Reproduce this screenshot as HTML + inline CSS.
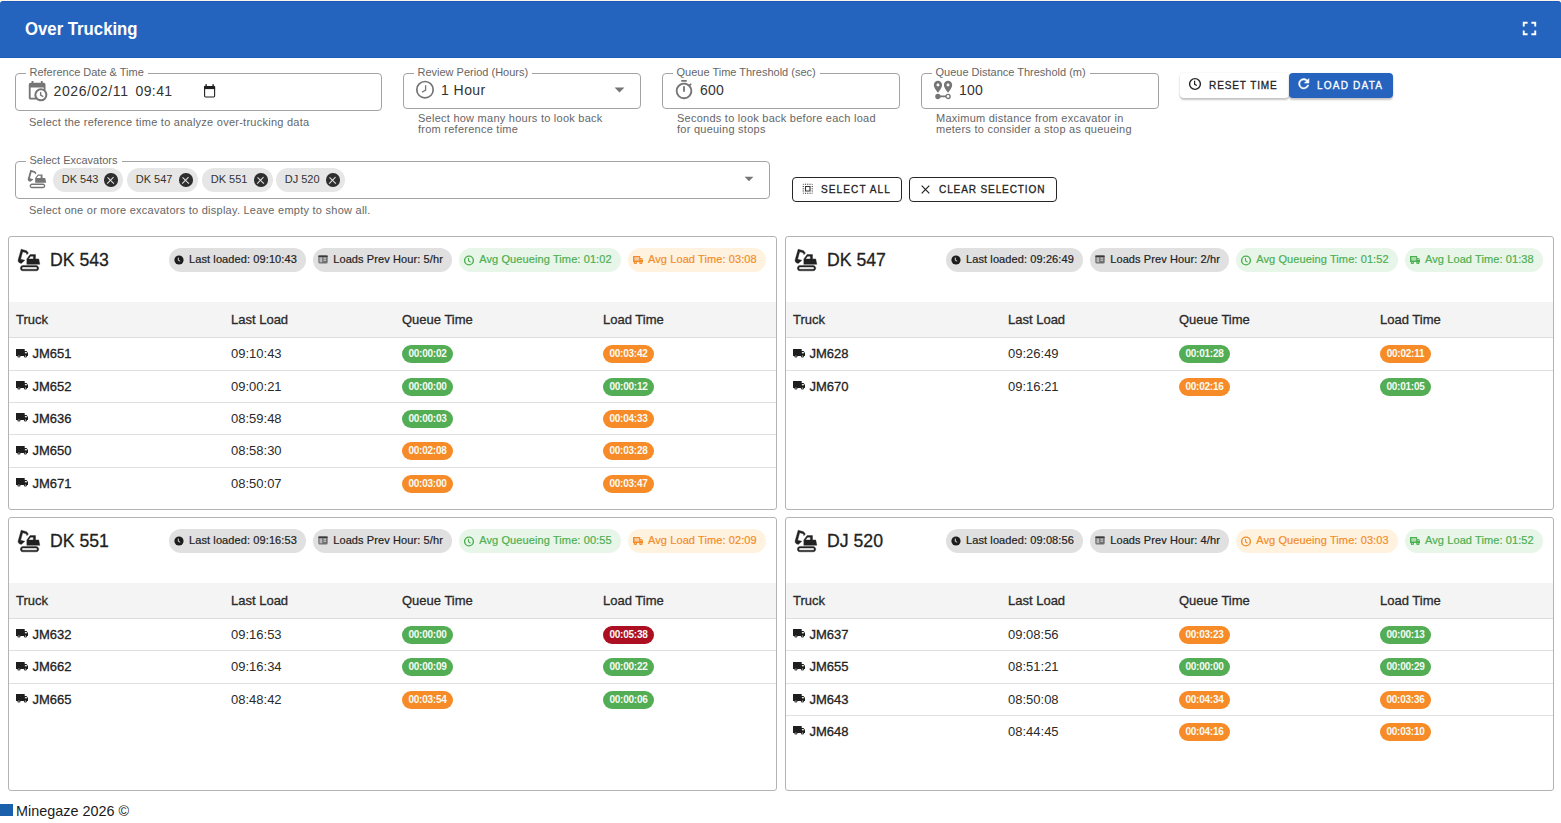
<!DOCTYPE html>
<html><head><meta charset="utf-8">
<style>
*{box-sizing:border-box;margin:0;padding:0}
html,body{width:1561px;height:823px;overflow:hidden;background:#fff;font-family:"Liberation Sans",sans-serif;color:#212121}
.abs{position:absolute}
#topline{position:absolute;left:0;top:0;width:1561px;height:1px;background:#fcf6ea}
#hdr{position:absolute;left:0;top:1px;width:1561px;height:56px;background:#2564be;border-top:1px solid #1a5bbd;border-radius:3px 3px 0 0;box-shadow:0 1px 0 #1d5cb8}
#hdr .t{position:absolute;left:25px;top:17px;font-size:18px;font-weight:700;color:#fff;transform:scaleX(0.93);transform-origin:0 0;white-space:nowrap}
.fld{position:absolute;border:1px solid #a3a3a3;border-radius:4px}
.lbl{position:absolute;top:-8px;left:9.5px;padding:0 4px;background:#fff;font-size:11px;color:#666;white-space:nowrap;line-height:12px}
.help{position:absolute;font-size:11px;color:#666;letter-spacing:0.25px;line-height:11px;white-space:nowrap}
.val{position:absolute;font-size:14px;color:#333;white-space:nowrap}
.btn{position:absolute;border-radius:4px;font-size:11px;font-weight:400;-webkit-text-stroke:0.3px currentColor;white-space:nowrap}
.card{position:absolute;border:1px solid #b4b4b4;border-radius:3px;background:#fff;overflow:hidden}
.card .ttl{position:absolute;left:40.5px;top:12px;font-size:19px;color:#212121;white-space:nowrap;-webkit-text-stroke:0.3px #212121;transform:scaleX(0.93);transform-origin:0 0}
.card .ico{position:absolute;left:7px;top:10px}
.chips{position:absolute;top:11px;display:flex;gap:7.3px}
.chip{height:24px;border-radius:12px;background:#e0e0e0;font-size:11px;color:#222;display:flex;align-items:center;padding:0 9px 2px 5px;white-space:nowrap;letter-spacing:0.1px;-webkit-text-stroke:0.2px currentColor}
.chip svg{margin-right:5px;position:relative;top:1px}
.chip.g{background:#e8f5e9;color:#4caf50}
.chip.o{background:#fff3e0;color:#f28c28}
.thead{position:absolute;left:0;top:65px;width:100%;height:36px;background:#f4f4f4;border-bottom:1px solid #dcdcdc}
.th{position:absolute;top:10px;font-size:13px;font-weight:400;-webkit-text-stroke:0.3px #2a2a2a;color:#2a2a2a;white-space:nowrap}
.row{position:absolute;left:0;width:100%;height:32.35px;border-bottom:1px solid #e0e0e0}
.row.last{border-bottom:none}
.cell{position:absolute;top:8px;font-size:13px;color:#2a2a2a;white-space:nowrap}
.truck{-webkit-text-stroke:0.3px #222;color:#222;padding-left:16.4px}
.tk{position:absolute;left:0.2px;top:2.4px}
.bdg{position:absolute;top:7px;height:18px;width:51px;border-radius:9px;font-size:10px;font-weight:700;color:#f6fbf6;text-align:center;line-height:17.5px;letter-spacing:-0.25px}
.bg{background:#52ad55}
.bo{background:#f68b27}
.br{background:#ad0f22}
#foot{position:absolute;left:0;top:803px;font-size:14.4px;line-height:16px;color:#1a1a1a;white-space:nowrap}
.bt{font-size:11.2px;letter-spacing:0.95px;transform:scaleX(0.9);transform-origin:0 0}
.schip{position:absolute;top:168px;height:24px;border-radius:12px;background:#e6e6e6;font-size:11px;color:#333}
.schip span{position:absolute;left:8.7px;top:5px;white-space:nowrap}
.schip i{position:absolute;right:5.5px;top:5.2px;width:13.5px;height:13.5px;border-radius:50%;background:#2e2e2e}
.schip i:before,.schip i:after{content:"";position:absolute;left:6.15px;top:2.5px;width:1.2px;height:8.5px;background:#e6e6e6;transform:rotate(45deg)}
.schip i:after{transform:rotate(-45deg)}
</style></head><body>
<div id="topline"></div>
<div id="hdr"><div class="t">Over Trucking</div>
<svg class="abs" style="left:1518px;top:15.3px" width="23" height="23" viewBox="0 0 24 24"><path fill="#fff" d="M7 14H5v5h5v-2H7v-3zm-2-4h2V7h3V5H5v5zm12 7h-3v2h5v-5h-2v3zM14 5v2h3v3h2V5h-5z"/></svg>
</div>

<!-- FORM ROW 1 -->
<div class="fld" style="left:15px;top:73px;width:367px;height:38px">
  <div class="lbl">Reference Date &amp; Time</div>
</div>
<svg class="abs" style="left:25.5px;top:79.6px" width="22.3" height="22.3" viewBox="0 0 24 24"><path fill="#757575" d="M15,13H16.5V15.82L18.94,17.23L18.19,18.53L15,16.69V13M19,8H5V19H9.67C9.24,18.09 9,17.07 9,16A7,7 0 0,1 16,9C17.070,9 18.09,9.24 19,9.67V8M5,21C3.89,21 3,20.1 3,19V5C3,3.89 3.89,3 5,3H6V1H8V3H16V1H18V3H19A2,2 0 0,1 21,5V11.1C22.24,12.36 23,14.09 23,16A7,7 0 0,1 16,23C14.09,23 12.36,22.24 11.1,21H5M16,11.15A4.85,4.85 0 0,0 11.15,16C11.15,18.68 13.32,20.85 16,20.85A4.85,4.85 0 0,0 20.85,16C20.85,13.32 18.68,11.15 16,11.15Z"/></svg>
<div class="val" style="left:53.5px;top:83px;letter-spacing:0.6px">2026/02/11</div>
<div class="val" style="left:135.5px;top:83px;letter-spacing:0.4px">09:41</div>
<svg class="abs" style="left:203px;top:84px" width="13" height="14" viewBox="0 0 13 14"><rect x="1.6" y="2.6" width="10" height="10.4" rx="0.9" fill="none" stroke="#1f1f1f" stroke-width="1.1"/><rect x="1.1" y="2.1" width="11" height="3" fill="#1f1f1f"/><rect x="2.4" y="0.2" width="1.4" height="2.2" fill="#1f1f1f"/><rect x="9.4" y="0.2" width="1.4" height="2.2" fill="#1f1f1f"/></svg>
<div class="help" style="left:29px;top:117px">Select the reference time to analyze over-trucking data</div>

<div class="fld" style="left:403px;top:73px;width:238px;height:36px">
  <div class="lbl">Review Period (Hours)</div>
</div>
<svg class="abs" style="left:415px;top:80px" width="20" height="20" viewBox="0 0 20 20"><circle cx="10" cy="9.7" r="8.2" fill="none" stroke="#757575" stroke-width="1.7"/><path d="M10.6 5.2V10.1L7 12.3" fill="none" stroke="#757575" stroke-width="1.3"/></svg>
<div class="val" style="left:441px;top:82px;letter-spacing:0.45px">1 Hour</div>
<svg class="abs" style="left:614px;top:87px" width="11" height="6" viewBox="0 0 11 6"><path d="M0.6 0.4H10.4L5.5 5.6Z" fill="#757575"/></svg>
<div class="help" style="left:418px;top:113px">Select how many hours to look back<br>from reference time</div>

<div class="fld" style="left:662px;top:73px;width:238px;height:36px">
  <div class="lbl">Queue Time Threshold (sec)</div>
</div>
<svg class="abs" style="left:673px;top:79px" width="22" height="22" viewBox="0 0 24 24"><path fill="#757575" d="M12,20A7,7 0 0,1 5,13A7,7 0 0,1 12,6A7,7 0 0,1 19,13A7,7 0 0,1 12,20M19.03,7.39L20.45,5.97C20,5.46 19.55,5 19.04,4.56L17.62,6C16.07,4.74 14.12,4 12,4A9,9 0 0,0 3,13A9,9 0 0,0 12,22C17,22 21,17.97 21,13C21,10.88 20.26,8.93 19.03,7.39M11,14H13V8H11M15,1H9V3H15V1Z"/></svg>
<div class="val" style="left:700px;top:82px;letter-spacing:0.2px">600</div>
<div class="help" style="left:677px;top:113px">Seconds to look back before each load<br>for queuing stops</div>

<div class="fld" style="left:921px;top:73px;width:238px;height:36px">
  <div class="lbl">Queue Distance Threshold (m)</div>
</div>
<svg class="abs" style="left:932px;top:79px" width="22" height="22" viewBox="0 0 24 24"><path fill="#757575" d="M6.5,8.11C5.61,8.11 4.89,7.39 4.89,6.5A1.61,1.61 0 0,1 6.5,4.89C7.39,4.89 8.11,5.61 8.11,6.5V6.5A1.61,1.61 0 0,1 6.5,8.11M6.5,2C4,2 2,4 2,6.5C2,9.87 6.5,14.86 6.5,14.86C6.5,14.86 11,9.87 11,6.5C11,4 9,2 6.5,2M17.5,8.11A1.61,1.61 0 0,1 15.89,6.5C15.89,5.61 16.61,4.89 17.5,4.89C18.39,4.89 19.11,5.61 19.11,6.5A1.61,1.61 0 0,1 17.5,8.11M17.5,2C15,2 13,4 13,6.5C13,9.87 17.5,14.86 17.5,14.86C17.5,14.86 22,9.87 22,6.5C22,4 20,2 17.5,2M17.5,16C16.23,16 15.1,16.8 14.68,18H9.32C8.9,16.8 7.77,16 6.5,16A3,3 0 0,0 3.5,19A3,3 0 0,0 6.5,22C7.77,22 8.9,21.2 9.32,20H14.68C15.1,21.2 16.23,22 17.5,22A3,3 0 0,0 20.5,19A3,3 0 0,0 17.5,16M17.5,20.5A1.5,1.5 0 0,1 16,19A1.5,1.5 0 0,1 17.5,17.5A1.5,1.5 0 0,1 19,19A1.5,1.5 0 0,1 17.5,20.5Z"/></svg>
<div class="val" style="left:959px;top:82px;letter-spacing:0.2px">100</div>
<div class="help" style="left:936px;top:113px">Maximum distance from excavator in<br>meters to consider a stop as queueing</div>

<div class="btn" style="left:1180px;top:73px;width:109px;height:25px;background:#fff;color:#222;box-shadow:0 2px 2px rgba(0,0,0,.22),0 0 2px rgba(0,0,0,.1)">
 <svg class="abs" style="left:8px;top:4px" width="14" height="14" viewBox="0 0 14 14"><circle cx="7" cy="7" r="5.4" fill="none" stroke="#222" stroke-width="1.4"/><path d="M6.6 3.8V7.3L8.8 8.6" fill="none" stroke="#222" stroke-width="1.2"/></svg>
 <span class="abs bt" style="left:29px;top:6px">RESET TIME</span>
</div>
<div class="btn" style="left:1289px;top:73px;width:104px;height:25px;background:#2563be;color:#fff;box-shadow:0 2px 2px rgba(0,0,0,.22),0 0 2px rgba(0,0,0,.1)">
 <svg class="abs" style="left:6.9px;top:3.2px" width="15.5" height="15.5" viewBox="0 0 24 24"><path fill="#fff" stroke="#fff" stroke-width="0.8" d="M17.65,6.35C16.2,4.9 14.21,4 12,4A8,8 0 0,0 4,12A8,8 0 0,0 12,20C15.73,20 18.84,17.45 19.73,14H17.65C16.83,16.33 14.61,18 12,18A6,6 0 0,1 6,12A6,6 0 0,1 12,6C13.66,6 15.14,6.69 16.22,7.78L13,11H20V4L17.65,6.35Z"/></svg>
 <span class="abs bt" style="left:28px;top:6px;letter-spacing:1.3px">LOAD DATA</span>
</div>

<!-- FORM ROW 2 -->
<div class="fld" style="left:15px;top:161px;width:755px;height:38px">
  <div class="lbl">Select Excavators</div>
</div>
<svg class="abs" style="left:26px;top:168px" width="22" height="22" viewBox="0 0 24 24"><path fill="#757575" d="M18.5,18.5C19.04,18.5 19.5,18.96 19.5,19.5C19.5,20.04 19.04,20.5 18.5,20.5H6.5C5.96,20.5 5.5,20.04 5.5,19.5C5.5,18.96 5.960,18.5 6.5,18.5H18.5M18.5,17H6.5C5.13,17 4,18.13 4,19.5C4,20.87 5.13,22 6.5,22H18.5C19.87,22 21,20.87 21,19.5C21,18.13 19.87,17 18.5,17M21,11H18V7H13L10,11V16H22L21,11M11.54,11L13.5,8.5H16V11H11.54M9.76,3.41L4.76,2L2,11.83C1.66,13.11 2.41,14.44 3.7,14.8L4.86,15.12L8.15,12.29L4.27,11.21L6.15,4.46L8.64,5.15C9.5,5.39 10.06,6.2 10,7.09L11.43,5.55L9.76,3.41Z"/></svg>
<div class="schip" style="left:53px;width:70px"><span>DK 543</span><i></i></div>
<div class="schip" style="left:127px;width:71px"><span>DK 547</span><i></i></div>
<div class="schip" style="left:202px;width:71px"><span>DK 551</span><i></i></div>
<div class="schip" style="left:276px;width:69px"><span>DJ 520</span><i></i></div>
<svg class="abs" style="left:744px;top:176px" width="10" height="6" viewBox="0 0 10 6"><path d="M0.6 0.8H9.4L5 5.2Z" fill="#757575"/></svg>
<div class="help" style="left:29px;top:205px">Select one or more excavators to display. Leave empty to show all.</div>

<div class="btn" style="left:792px;top:177px;width:110px;height:25px;border:1px solid #262626;color:#222">
 <svg class="abs" style="left:8.1px;top:4px" width="13.5" height="13.5" viewBox="0 0 24 24"><path fill="#333" d="M9,9H15V15H9M7,17H17V7H7M15,5H17V3H15M15,21H17V19H15M19,17H21V15H19M19,9H21V7H19M19,21A2,2 0 0,0 21,19H19M19,13H21V11H19M11,21H13V19H11M9,3H7V5H9M3,17H5V15H3M5,21V19H3A2,2 0 0,0 5,21M19,3V5H21A2,2 0 0,0 19,3M13,3H11V5H13M3,9H5V7H3M7,21H9V19H7M3,13H5V11H3M3,5H5V3A2,2 0 0,0 3,5Z"/></svg>
 <span class="abs bt" style="left:28px;top:5px;letter-spacing:1.2px">SELECT ALL</span>
</div>
<div class="btn" style="left:909px;top:177px;width:148px;height:25px;border:1px solid #262626;color:#222">
 <svg class="abs" style="left:11px;top:7px" width="9" height="9" viewBox="0 0 9 9"><path d="M0.7 0.7L8.3 8.3M8.3 0.7L0.7 8.3" stroke="#222" stroke-width="1.2"/></svg>
 <span class="abs bt" style="left:28.5px;top:5px">CLEAR SELECTION</span>
</div>

<!-- CARDS -->
<div id="cards"><div class="card" style="left:8px;top:236px;width:769px;height:274px">
<div class="ico"><svg width="26" height="26" viewBox="0 0 24 24"><path fill="#212121" stroke="#212121" stroke-width="0.35" d="M18.5,18.5C19.04,18.5 19.5,18.96 19.5,19.5C19.5,20.04 19.04,20.5 18.5,20.5H6.5C5.96,20.5 5.5,20.04 5.5,19.5C5.5,18.96 5.96,18.5 6.5,18.5H18.5M18.5,17H6.5C5.13,17 4,18.13 4,19.5C4,20.87 5.13,22 6.5,22H18.5C19.87,22 21,20.87 21,19.5C21,18.13 19.87,17 18.5,17M21,11H18V7H13L10,11V16H22L21,11M11.54,11L13.5,8.5H16V11H11.54M9.76,3.41L4.76,2L2,11.83C1.66,13.11 2.41,14.44 3.7,14.8L4.86,15.12L8.15,12.29L4.27,11.21L6.15,4.46L8.64,5.15C9.5,5.39 10.06,6.2 10,7.09L11.43,5.55L9.76,3.41Z"/></svg></div><div class="ttl">DK 543</div>
<div class="chips" style="left:160px"><div class="chip"><svg width="10" height="10" viewBox="0 0 10 10"><circle cx="5" cy="5" r="4.6" fill="#1c1c1c"/><path d="M4.3 2.6V5.3L6.2 6.2" fill="none" stroke="#ddd" stroke-width="1"/></svg>Last loaded: 09:10:43</div><div class="chip"><svg width="10" height="9" viewBox="0 0 10 9" style="top:0.5px"><rect x="0.3" y="0.5" width="9.4" height="8" rx="1.5" fill="#707070"/><rect x="0.3" y="0.5" width="9.4" height="1.4" fill="#333"/><rect x="1.6" y="2.4" width="2.6" height="4.8" fill="#b8b8b8"/><rect x="5.5" y="2.6" width="2.6" height="1.2" fill="#ccc"/><rect x="5.5" y="4.6" width="2.6" height="1.2" fill="#ccc"/></svg>Loads Prev Hour: 5/hr</div><div class="chip g"><svg width="10" height="11" viewBox="0.5 0 10 11"><circle cx="5.5" cy="5.5" r="4.4" fill="none" stroke="#4caf50" stroke-width="1.4"/><path d="M5 3V5.8L7 7.2" fill="none" stroke="#4caf50" stroke-width="1.1"/></svg>Avg Queueing Time: 01:02</div><div class="chip o"><svg width="10.4" height="8.4" viewBox="0 0 10.4 8.4" style="margin-left:-0.2px;margin-right:4.8px;position:relative;top:1px"><path d="M0 0.2Q0 0 0.3 0H7.2V1.9H8.9L10.4 3.8V5.9H0Z" fill="#f28c28"/><rect x="1.4" y="1.1" width="4.8" height="3.5" fill="#fff" opacity="0.55"/><rect x="7.6" y="2.8" width="1.8" height="1.1" fill="#fff" opacity="0.6"/><circle cx="2.4" cy="6.6" r="1.6" fill="#f28c28"/><circle cx="7.9" cy="6.6" r="1.6" fill="#f28c28"/><circle cx="2.4" cy="6.6" r="0.6" fill="#fff" opacity="0.6"/><circle cx="7.9" cy="6.6" r="0.6" fill="#fff" opacity="0.6"/></svg>Avg Load Time: 03:08</div></div>
<div class="thead"><div class="th" style="left:7px">Truck</div><div class="th" style="left:222px">Last Load</div><div class="th" style="left:393px">Queue Time</div><div class="th" style="left:594px">Load Time</div></div>
<div class="row" style="top:101.4px"><div class="cell truck" style="left:7px"><svg class="tk" width="12" height="9" viewBox="0 0 12 9"><path d="M0 0.3Q0 0 0.3 0H8.7V2.1H10.6L12 4V7H0Z" fill="#1e1e1e"/><rect x="8.9" y="3.1" width="2" height="1.2" fill="#fff"/><circle cx="2.9" cy="7" r="1.6" fill="#1e1e1e"/><circle cx="9.4" cy="7" r="1.6" fill="#1e1e1e"/><circle cx="2.9" cy="7" r="0.6" fill="#fff"/><circle cx="9.4" cy="7" r="0.6" fill="#fff"/></svg>JM651</div><div class="cell" style="left:222px">09:10:43</div><div class="bdg bg" style="left:393px">00:00:02</div><div class="bdg bo" style="left:594px">00:03:42</div></div>
<div class="row" style="top:133.75px"><div class="cell truck" style="left:7px"><svg class="tk" width="12" height="9" viewBox="0 0 12 9"><path d="M0 0.3Q0 0 0.3 0H8.7V2.1H10.6L12 4V7H0Z" fill="#1e1e1e"/><rect x="8.9" y="3.1" width="2" height="1.2" fill="#fff"/><circle cx="2.9" cy="7" r="1.6" fill="#1e1e1e"/><circle cx="9.4" cy="7" r="1.6" fill="#1e1e1e"/><circle cx="2.9" cy="7" r="0.6" fill="#fff"/><circle cx="9.4" cy="7" r="0.6" fill="#fff"/></svg>JM652</div><div class="cell" style="left:222px">09:00:21</div><div class="bdg bg" style="left:393px">00:00:00</div><div class="bdg bg" style="left:594px">00:00:12</div></div>
<div class="row" style="top:166.1px"><div class="cell truck" style="left:7px"><svg class="tk" width="12" height="9" viewBox="0 0 12 9"><path d="M0 0.3Q0 0 0.3 0H8.7V2.1H10.6L12 4V7H0Z" fill="#1e1e1e"/><rect x="8.9" y="3.1" width="2" height="1.2" fill="#fff"/><circle cx="2.9" cy="7" r="1.6" fill="#1e1e1e"/><circle cx="9.4" cy="7" r="1.6" fill="#1e1e1e"/><circle cx="2.9" cy="7" r="0.6" fill="#fff"/><circle cx="9.4" cy="7" r="0.6" fill="#fff"/></svg>JM636</div><div class="cell" style="left:222px">08:59:48</div><div class="bdg bg" style="left:393px">00:00:03</div><div class="bdg bo" style="left:594px">00:04:33</div></div>
<div class="row" style="top:198.45px"><div class="cell truck" style="left:7px"><svg class="tk" width="12" height="9" viewBox="0 0 12 9"><path d="M0 0.3Q0 0 0.3 0H8.7V2.1H10.6L12 4V7H0Z" fill="#1e1e1e"/><rect x="8.9" y="3.1" width="2" height="1.2" fill="#fff"/><circle cx="2.9" cy="7" r="1.6" fill="#1e1e1e"/><circle cx="9.4" cy="7" r="1.6" fill="#1e1e1e"/><circle cx="2.9" cy="7" r="0.6" fill="#fff"/><circle cx="9.4" cy="7" r="0.6" fill="#fff"/></svg>JM650</div><div class="cell" style="left:222px">08:58:30</div><div class="bdg bo" style="left:393px">00:02:08</div><div class="bdg bo" style="left:594px">00:03:28</div></div>
<div class="row last" style="top:230.8px"><div class="cell truck" style="left:7px"><svg class="tk" width="12" height="9" viewBox="0 0 12 9"><path d="M0 0.3Q0 0 0.3 0H8.7V2.1H10.6L12 4V7H0Z" fill="#1e1e1e"/><rect x="8.9" y="3.1" width="2" height="1.2" fill="#fff"/><circle cx="2.9" cy="7" r="1.6" fill="#1e1e1e"/><circle cx="9.4" cy="7" r="1.6" fill="#1e1e1e"/><circle cx="2.9" cy="7" r="0.6" fill="#fff"/><circle cx="9.4" cy="7" r="0.6" fill="#fff"/></svg>JM671</div><div class="cell" style="left:222px">08:50:07</div><div class="bdg bo" style="left:393px">00:03:00</div><div class="bdg bo" style="left:594px">00:03:47</div></div>
</div>
<div class="card" style="left:785px;top:236px;width:769px;height:274px">
<div class="ico"><svg width="26" height="26" viewBox="0 0 24 24"><path fill="#212121" stroke="#212121" stroke-width="0.35" d="M18.5,18.5C19.04,18.5 19.5,18.96 19.5,19.5C19.5,20.04 19.04,20.5 18.5,20.5H6.5C5.96,20.5 5.5,20.04 5.5,19.5C5.5,18.96 5.96,18.5 6.5,18.5H18.5M18.5,17H6.5C5.13,17 4,18.13 4,19.5C4,20.87 5.13,22 6.5,22H18.5C19.87,22 21,20.87 21,19.5C21,18.13 19.87,17 18.5,17M21,11H18V7H13L10,11V16H22L21,11M11.54,11L13.5,8.5H16V11H11.54M9.76,3.41L4.76,2L2,11.83C1.66,13.11 2.41,14.44 3.7,14.8L4.86,15.12L8.15,12.29L4.27,11.21L6.15,4.46L8.64,5.15C9.5,5.39 10.06,6.2 10,7.09L11.43,5.55L9.76,3.41Z"/></svg></div><div class="ttl">DK 547</div>
<div class="chips" style="left:160px"><div class="chip"><svg width="10" height="10" viewBox="0 0 10 10"><circle cx="5" cy="5" r="4.6" fill="#1c1c1c"/><path d="M4.3 2.6V5.3L6.2 6.2" fill="none" stroke="#ddd" stroke-width="1"/></svg>Last loaded: 09:26:49</div><div class="chip"><svg width="10" height="9" viewBox="0 0 10 9" style="top:0.5px"><rect x="0.3" y="0.5" width="9.4" height="8" rx="1.5" fill="#707070"/><rect x="0.3" y="0.5" width="9.4" height="1.4" fill="#333"/><rect x="1.6" y="2.4" width="2.6" height="4.8" fill="#b8b8b8"/><rect x="5.5" y="2.6" width="2.6" height="1.2" fill="#ccc"/><rect x="5.5" y="4.6" width="2.6" height="1.2" fill="#ccc"/></svg>Loads Prev Hour: 2/hr</div><div class="chip g"><svg width="10" height="11" viewBox="0.5 0 10 11"><circle cx="5.5" cy="5.5" r="4.4" fill="none" stroke="#4caf50" stroke-width="1.4"/><path d="M5 3V5.8L7 7.2" fill="none" stroke="#4caf50" stroke-width="1.1"/></svg>Avg Queueing Time: 01:52</div><div class="chip g"><svg width="10.4" height="8.4" viewBox="0 0 10.4 8.4" style="margin-left:-0.2px;margin-right:4.8px;position:relative;top:1px"><path d="M0 0.2Q0 0 0.3 0H7.2V1.9H8.9L10.4 3.8V5.9H0Z" fill="#4caf50"/><rect x="1.4" y="1.1" width="4.8" height="3.5" fill="#fff" opacity="0.55"/><rect x="7.6" y="2.8" width="1.8" height="1.1" fill="#fff" opacity="0.6"/><circle cx="2.4" cy="6.6" r="1.6" fill="#4caf50"/><circle cx="7.9" cy="6.6" r="1.6" fill="#4caf50"/><circle cx="2.4" cy="6.6" r="0.6" fill="#fff" opacity="0.6"/><circle cx="7.9" cy="6.6" r="0.6" fill="#fff" opacity="0.6"/></svg>Avg Load Time: 01:38</div></div>
<div class="thead"><div class="th" style="left:7px">Truck</div><div class="th" style="left:222px">Last Load</div><div class="th" style="left:393px">Queue Time</div><div class="th" style="left:594px">Load Time</div></div>
<div class="row" style="top:101.4px"><div class="cell truck" style="left:7px"><svg class="tk" width="12" height="9" viewBox="0 0 12 9"><path d="M0 0.3Q0 0 0.3 0H8.7V2.1H10.6L12 4V7H0Z" fill="#1e1e1e"/><rect x="8.9" y="3.1" width="2" height="1.2" fill="#fff"/><circle cx="2.9" cy="7" r="1.6" fill="#1e1e1e"/><circle cx="9.4" cy="7" r="1.6" fill="#1e1e1e"/><circle cx="2.9" cy="7" r="0.6" fill="#fff"/><circle cx="9.4" cy="7" r="0.6" fill="#fff"/></svg>JM628</div><div class="cell" style="left:222px">09:26:49</div><div class="bdg bg" style="left:393px">00:01:28</div><div class="bdg bo" style="left:594px">00:02:11</div></div>
<div class="row last" style="top:133.75px"><div class="cell truck" style="left:7px"><svg class="tk" width="12" height="9" viewBox="0 0 12 9"><path d="M0 0.3Q0 0 0.3 0H8.7V2.1H10.6L12 4V7H0Z" fill="#1e1e1e"/><rect x="8.9" y="3.1" width="2" height="1.2" fill="#fff"/><circle cx="2.9" cy="7" r="1.6" fill="#1e1e1e"/><circle cx="9.4" cy="7" r="1.6" fill="#1e1e1e"/><circle cx="2.9" cy="7" r="0.6" fill="#fff"/><circle cx="9.4" cy="7" r="0.6" fill="#fff"/></svg>JM670</div><div class="cell" style="left:222px">09:16:21</div><div class="bdg bo" style="left:393px">00:02:16</div><div class="bdg bg" style="left:594px">00:01:05</div></div>
</div>
<div class="card" style="left:8px;top:517px;width:769px;height:274px">
<div class="ico"><svg width="26" height="26" viewBox="0 0 24 24"><path fill="#212121" stroke="#212121" stroke-width="0.35" d="M18.5,18.5C19.04,18.5 19.5,18.96 19.5,19.5C19.5,20.04 19.04,20.5 18.5,20.5H6.5C5.96,20.5 5.5,20.04 5.5,19.5C5.5,18.96 5.96,18.5 6.5,18.5H18.5M18.5,17H6.5C5.13,17 4,18.13 4,19.5C4,20.87 5.13,22 6.5,22H18.5C19.87,22 21,20.87 21,19.5C21,18.13 19.87,17 18.5,17M21,11H18V7H13L10,11V16H22L21,11M11.54,11L13.5,8.5H16V11H11.54M9.76,3.41L4.76,2L2,11.83C1.66,13.11 2.41,14.44 3.7,14.8L4.86,15.12L8.15,12.29L4.27,11.21L6.15,4.46L8.64,5.15C9.5,5.39 10.06,6.2 10,7.09L11.43,5.55L9.76,3.41Z"/></svg></div><div class="ttl">DK 551</div>
<div class="chips" style="left:160px"><div class="chip"><svg width="10" height="10" viewBox="0 0 10 10"><circle cx="5" cy="5" r="4.6" fill="#1c1c1c"/><path d="M4.3 2.6V5.3L6.2 6.2" fill="none" stroke="#ddd" stroke-width="1"/></svg>Last loaded: 09:16:53</div><div class="chip"><svg width="10" height="9" viewBox="0 0 10 9" style="top:0.5px"><rect x="0.3" y="0.5" width="9.4" height="8" rx="1.5" fill="#707070"/><rect x="0.3" y="0.5" width="9.4" height="1.4" fill="#333"/><rect x="1.6" y="2.4" width="2.6" height="4.8" fill="#b8b8b8"/><rect x="5.5" y="2.6" width="2.6" height="1.2" fill="#ccc"/><rect x="5.5" y="4.6" width="2.6" height="1.2" fill="#ccc"/></svg>Loads Prev Hour: 5/hr</div><div class="chip g"><svg width="10" height="11" viewBox="0.5 0 10 11"><circle cx="5.5" cy="5.5" r="4.4" fill="none" stroke="#4caf50" stroke-width="1.4"/><path d="M5 3V5.8L7 7.2" fill="none" stroke="#4caf50" stroke-width="1.1"/></svg>Avg Queueing Time: 00:55</div><div class="chip o"><svg width="10.4" height="8.4" viewBox="0 0 10.4 8.4" style="margin-left:-0.2px;margin-right:4.8px;position:relative;top:1px"><path d="M0 0.2Q0 0 0.3 0H7.2V1.9H8.9L10.4 3.8V5.9H0Z" fill="#f28c28"/><rect x="1.4" y="1.1" width="4.8" height="3.5" fill="#fff" opacity="0.55"/><rect x="7.6" y="2.8" width="1.8" height="1.1" fill="#fff" opacity="0.6"/><circle cx="2.4" cy="6.6" r="1.6" fill="#f28c28"/><circle cx="7.9" cy="6.6" r="1.6" fill="#f28c28"/><circle cx="2.4" cy="6.6" r="0.6" fill="#fff" opacity="0.6"/><circle cx="7.9" cy="6.6" r="0.6" fill="#fff" opacity="0.6"/></svg>Avg Load Time: 02:09</div></div>
<div class="thead"><div class="th" style="left:7px">Truck</div><div class="th" style="left:222px">Last Load</div><div class="th" style="left:393px">Queue Time</div><div class="th" style="left:594px">Load Time</div></div>
<div class="row" style="top:101.0px"><div class="cell truck" style="left:7px"><svg class="tk" width="12" height="9" viewBox="0 0 12 9"><path d="M0 0.3Q0 0 0.3 0H8.7V2.1H10.6L12 4V7H0Z" fill="#1e1e1e"/><rect x="8.9" y="3.1" width="2" height="1.2" fill="#fff"/><circle cx="2.9" cy="7" r="1.6" fill="#1e1e1e"/><circle cx="9.4" cy="7" r="1.6" fill="#1e1e1e"/><circle cx="2.9" cy="7" r="0.6" fill="#fff"/><circle cx="9.4" cy="7" r="0.6" fill="#fff"/></svg>JM632</div><div class="cell" style="left:222px">09:16:53</div><div class="bdg bg" style="left:393px">00:00:00</div><div class="bdg br" style="left:594px">00:05:38</div></div>
<div class="row" style="top:133.35px"><div class="cell truck" style="left:7px"><svg class="tk" width="12" height="9" viewBox="0 0 12 9"><path d="M0 0.3Q0 0 0.3 0H8.7V2.1H10.6L12 4V7H0Z" fill="#1e1e1e"/><rect x="8.9" y="3.1" width="2" height="1.2" fill="#fff"/><circle cx="2.9" cy="7" r="1.6" fill="#1e1e1e"/><circle cx="9.4" cy="7" r="1.6" fill="#1e1e1e"/><circle cx="2.9" cy="7" r="0.6" fill="#fff"/><circle cx="9.4" cy="7" r="0.6" fill="#fff"/></svg>JM662</div><div class="cell" style="left:222px">09:16:34</div><div class="bdg bg" style="left:393px">00:00:09</div><div class="bdg bg" style="left:594px">00:00:22</div></div>
<div class="row last" style="top:165.7px"><div class="cell truck" style="left:7px"><svg class="tk" width="12" height="9" viewBox="0 0 12 9"><path d="M0 0.3Q0 0 0.3 0H8.7V2.1H10.6L12 4V7H0Z" fill="#1e1e1e"/><rect x="8.9" y="3.1" width="2" height="1.2" fill="#fff"/><circle cx="2.9" cy="7" r="1.6" fill="#1e1e1e"/><circle cx="9.4" cy="7" r="1.6" fill="#1e1e1e"/><circle cx="2.9" cy="7" r="0.6" fill="#fff"/><circle cx="9.4" cy="7" r="0.6" fill="#fff"/></svg>JM665</div><div class="cell" style="left:222px">08:48:42</div><div class="bdg bo" style="left:393px">00:03:54</div><div class="bdg bg" style="left:594px">00:00:06</div></div>
</div>
<div class="card" style="left:785px;top:517px;width:769px;height:274px">
<div class="ico"><svg width="26" height="26" viewBox="0 0 24 24"><path fill="#212121" stroke="#212121" stroke-width="0.35" d="M18.5,18.5C19.04,18.5 19.5,18.96 19.5,19.5C19.5,20.04 19.04,20.5 18.5,20.5H6.5C5.96,20.5 5.5,20.04 5.5,19.5C5.5,18.96 5.96,18.5 6.5,18.5H18.5M18.5,17H6.5C5.13,17 4,18.13 4,19.5C4,20.87 5.13,22 6.5,22H18.5C19.87,22 21,20.87 21,19.5C21,18.13 19.87,17 18.5,17M21,11H18V7H13L10,11V16H22L21,11M11.54,11L13.5,8.5H16V11H11.54M9.76,3.41L4.76,2L2,11.83C1.66,13.11 2.41,14.44 3.7,14.8L4.86,15.12L8.15,12.29L4.27,11.21L6.15,4.46L8.64,5.15C9.5,5.39 10.06,6.2 10,7.09L11.43,5.55L9.76,3.41Z"/></svg></div><div class="ttl">DJ 520</div>
<div class="chips" style="left:160px"><div class="chip"><svg width="10" height="10" viewBox="0 0 10 10"><circle cx="5" cy="5" r="4.6" fill="#1c1c1c"/><path d="M4.3 2.6V5.3L6.2 6.2" fill="none" stroke="#ddd" stroke-width="1"/></svg>Last loaded: 09:08:56</div><div class="chip"><svg width="10" height="9" viewBox="0 0 10 9" style="top:0.5px"><rect x="0.3" y="0.5" width="9.4" height="8" rx="1.5" fill="#707070"/><rect x="0.3" y="0.5" width="9.4" height="1.4" fill="#333"/><rect x="1.6" y="2.4" width="2.6" height="4.8" fill="#b8b8b8"/><rect x="5.5" y="2.6" width="2.6" height="1.2" fill="#ccc"/><rect x="5.5" y="4.6" width="2.6" height="1.2" fill="#ccc"/></svg>Loads Prev Hour: 4/hr</div><div class="chip o"><svg width="10" height="11" viewBox="0.5 0 10 11"><circle cx="5.5" cy="5.5" r="4.4" fill="none" stroke="#f28c28" stroke-width="1.4"/><path d="M5 3V5.8L7 7.2" fill="none" stroke="#f28c28" stroke-width="1.1"/></svg>Avg Queueing Time: 03:03</div><div class="chip g"><svg width="10.4" height="8.4" viewBox="0 0 10.4 8.4" style="margin-left:-0.2px;margin-right:4.8px;position:relative;top:1px"><path d="M0 0.2Q0 0 0.3 0H7.2V1.9H8.9L10.4 3.8V5.9H0Z" fill="#4caf50"/><rect x="1.4" y="1.1" width="4.8" height="3.5" fill="#fff" opacity="0.55"/><rect x="7.6" y="2.8" width="1.8" height="1.1" fill="#fff" opacity="0.6"/><circle cx="2.4" cy="6.6" r="1.6" fill="#4caf50"/><circle cx="7.9" cy="6.6" r="1.6" fill="#4caf50"/><circle cx="2.4" cy="6.6" r="0.6" fill="#fff" opacity="0.6"/><circle cx="7.9" cy="6.6" r="0.6" fill="#fff" opacity="0.6"/></svg>Avg Load Time: 01:52</div></div>
<div class="thead"><div class="th" style="left:7px">Truck</div><div class="th" style="left:222px">Last Load</div><div class="th" style="left:393px">Queue Time</div><div class="th" style="left:594px">Load Time</div></div>
<div class="row" style="top:101.0px"><div class="cell truck" style="left:7px"><svg class="tk" width="12" height="9" viewBox="0 0 12 9"><path d="M0 0.3Q0 0 0.3 0H8.7V2.1H10.6L12 4V7H0Z" fill="#1e1e1e"/><rect x="8.9" y="3.1" width="2" height="1.2" fill="#fff"/><circle cx="2.9" cy="7" r="1.6" fill="#1e1e1e"/><circle cx="9.4" cy="7" r="1.6" fill="#1e1e1e"/><circle cx="2.9" cy="7" r="0.6" fill="#fff"/><circle cx="9.4" cy="7" r="0.6" fill="#fff"/></svg>JM637</div><div class="cell" style="left:222px">09:08:56</div><div class="bdg bo" style="left:393px">00:03:23</div><div class="bdg bg" style="left:594px">00:00:13</div></div>
<div class="row" style="top:133.35px"><div class="cell truck" style="left:7px"><svg class="tk" width="12" height="9" viewBox="0 0 12 9"><path d="M0 0.3Q0 0 0.3 0H8.7V2.1H10.6L12 4V7H0Z" fill="#1e1e1e"/><rect x="8.9" y="3.1" width="2" height="1.2" fill="#fff"/><circle cx="2.9" cy="7" r="1.6" fill="#1e1e1e"/><circle cx="9.4" cy="7" r="1.6" fill="#1e1e1e"/><circle cx="2.9" cy="7" r="0.6" fill="#fff"/><circle cx="9.4" cy="7" r="0.6" fill="#fff"/></svg>JM655</div><div class="cell" style="left:222px">08:51:21</div><div class="bdg bg" style="left:393px">00:00:00</div><div class="bdg bg" style="left:594px">00:00:29</div></div>
<div class="row" style="top:165.7px"><div class="cell truck" style="left:7px"><svg class="tk" width="12" height="9" viewBox="0 0 12 9"><path d="M0 0.3Q0 0 0.3 0H8.7V2.1H10.6L12 4V7H0Z" fill="#1e1e1e"/><rect x="8.9" y="3.1" width="2" height="1.2" fill="#fff"/><circle cx="2.9" cy="7" r="1.6" fill="#1e1e1e"/><circle cx="9.4" cy="7" r="1.6" fill="#1e1e1e"/><circle cx="2.9" cy="7" r="0.6" fill="#fff"/><circle cx="9.4" cy="7" r="0.6" fill="#fff"/></svg>JM643</div><div class="cell" style="left:222px">08:50:08</div><div class="bdg bo" style="left:393px">00:04:34</div><div class="bdg bo" style="left:594px">00:03:36</div></div>
<div class="row last" style="top:198.05px"><div class="cell truck" style="left:7px"><svg class="tk" width="12" height="9" viewBox="0 0 12 9"><path d="M0 0.3Q0 0 0.3 0H8.7V2.1H10.6L12 4V7H0Z" fill="#1e1e1e"/><rect x="8.9" y="3.1" width="2" height="1.2" fill="#fff"/><circle cx="2.9" cy="7" r="1.6" fill="#1e1e1e"/><circle cx="9.4" cy="7" r="1.6" fill="#1e1e1e"/><circle cx="2.9" cy="7" r="0.6" fill="#fff"/><circle cx="9.4" cy="7" r="0.6" fill="#fff"/></svg>JM648</div><div class="cell" style="left:222px">08:44:45</div><div class="bdg bo" style="left:393px">00:04:16</div><div class="bdg bo" style="left:594px">00:03:10</div></div>
</div></div><!--/cards-->

<div id="foot"><span style="position:absolute;left:0;top:1px;width:13px;height:12px;background:#1b60aa"></span><span style="position:absolute;left:16px;top:0;white-space:nowrap">Minegaze 2026 ©</span></div>
</body></html>
